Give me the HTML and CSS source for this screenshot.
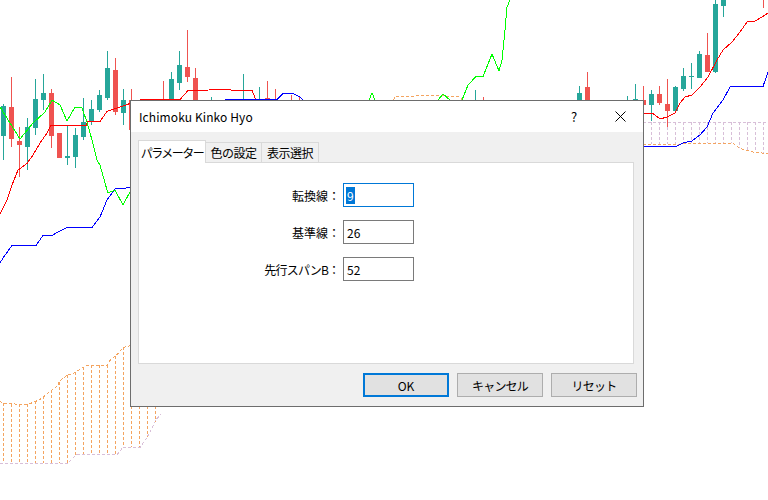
FILE: index.html
```html
<!DOCTYPE html>
<html lang="ja">
<head>
    <meta charset="UTF-8">
    <title>Ichimoku Kinko Hyo</title>
    <link rel="stylesheet" href="styles.css">
</head>
<body>
    <div class="chart">
        <svg class="plot" width="768" height="500" viewBox="0 0 768 500" shape-rendering="crispEdges">
            <!-- 雲 (先行スパン) -->
            <g fill="none" stroke-width="1" stroke-dasharray="3 2">
                <polyline stroke="#f4a460" points="0,401.5 3,403.5 27,404.5 33,402.5 40,399.5 50,391.5 57,386.5 60,380.5 67,375.5 75,372.5 83,367.5 87,365.5 107,365.5 110,360.5 117,354.5 123,347.5 131,345.5"/>
                <polyline stroke="#d8bfd8" points="0,463.5 67,463.5 77,454.5 117,454.5 123,447.5 140,447.5 147,437.5 157,418.5 161,414.5"/>
                <path stroke="#f4a460" d="M3.5 403V463M11.5 404V463M19.5 404V463M27.5 404V463M35.5 401V463M43.5 396V463M51.5 390V463M59.5 382V463M67.5 375V463M75.5 372V456M83.5 367V454M91.5 365V454M99.5 365V454M107.5 365V454M115.5 356V454M123.5 347V447M131.5 406V447M139.5 406V447M147.5 406V437M155.5 406V422"/>
                <polyline stroke="#f4a460" points="393,100 396,96.5 432,95.5 460,96.5 462,100"/>
                <polyline stroke="#d8bfd8" points="643,122.5 768,122.5"/>
                <polyline stroke="#f4a460" points="643,144.5 677,144.5 687,143.5 733,143.5 740,148.5 755,152.5 768,153.5"/>
                <path stroke="#d8bfd8" d="M651.5 122V144M659.5 122V144M667.5 122V144M675.5 122V144M683.5 122V143M691.5 122V143M699.5 122V143M707.5 122V143M715.5 122V143M723.5 122V143M731.5 122V143M739.5 122V148M747.5 122V150M755.5 122V152M763.5 122V153"/>
            </g>

            <!-- ローソク足 -->
            <g stroke="#26a69a" stroke-width="1">
                <path d="M3.5 104V160M27.5 118V170M35.5 79V135M43.5 74V110M67.5 125V165M75.5 128V168M83.5 98V140M91.5 100V125M99.5 90V112M107.5 51V100M123.5 89V125M171.5 72V100M179.5 51V90M211.5 97V100M243.5 74V100M259.5 87V100M475.5 90V100M579.5 86V100M627.5 96V100M635.5 84V100M651.5 90V121M675.5 86V111M683.5 68V91M691.5 63V89M699.5 51V78M715.5 0V73M723.5 0V17"/>
            </g>
            <g fill="#26a69a">
                <rect x="1" y="106" width="5" height="30"/>
                <rect x="25" y="127" width="5" height="20"/>
                <rect x="33" y="99" width="5" height="29"/>
                <rect x="41" y="93" width="5" height="7"/>
                <rect x="65" y="156" width="5" height="2"/>
                <rect x="73" y="135" width="5" height="22"/>
                <rect x="81" y="122" width="5" height="15"/>
                <rect x="89" y="109" width="5" height="13"/>
                <rect x="97" y="95" width="5" height="15"/>
                <rect x="105" y="68" width="5" height="30"/>
                <rect x="121" y="100" width="5" height="13"/>
                <rect x="169" y="79" width="5" height="21"/>
                <rect x="177" y="65" width="5" height="18"/>
                <rect x="577" y="93" width="5" height="7"/>
                <rect x="633" y="99" width="5" height="2"/>
                <rect x="649" y="94" width="5" height="11"/>
                <rect x="673" y="87" width="5" height="24"/>
                <rect x="681" y="76" width="5" height="13"/>
                <rect x="689" y="76" width="5" height="1"/>
                <rect x="697" y="54" width="5" height="24"/>
                <rect x="713" y="4" width="5" height="68"/>
                <rect x="721" y="0" width="5" height="6"/>
            </g>
            <g stroke="#ef5350" stroke-width="1">
                <path d="M11.5 77V147M19.5 127V177M51.5 89V148M115.5 58V115M131.5 89V130M163.5 81V100M187.5 30V82M195.5 68V100M267.5 81V100M275.5 89V100M291.5 95V100M299.5 97V100M483.5 97V100M587.5 72V100M643.5 86V105M659.5 86V105M667.5 79V127M707.5 33V72M763.5 0V8"/>
            </g>
            <g fill="#ef5350">
                <rect x="9" y="107" width="5" height="32"/>
                <rect x="17" y="141" width="5" height="4"/>
                <rect x="49" y="93" width="5" height="43"/>
                <rect x="57" y="133" width="5" height="25"/>
                <rect x="113" y="70" width="5" height="42"/>
                <rect x="129" y="100" width="5" height="30"/>
                <rect x="185" y="67" width="5" height="10"/>
                <rect x="193" y="78" width="5" height="22"/>
                <rect x="265" y="98" width="5" height="2"/>
                <rect x="585" y="87" width="5" height="13"/>
                <rect x="641" y="100" width="5" height="5"/>
                <rect x="657" y="94" width="5" height="9"/>
                <rect x="665" y="104" width="5" height="7"/>
                <rect x="705" y="55" width="5" height="17"/>
            </g>

            <!-- 転換線・基準線・遅行スパン -->
            <g fill="none" stroke-width="1">
                <polyline stroke="#ff0000" points="0,214 7,200 12,185 18,170 27,163.5 33,155 40,143 47,133 51,125.5 86,125.5 88,121.5 100,121.5 107,111.5 140,100 147,99.5 180,99.5 188,90.5 230,89.5 232,90.5 252,90.5 256,100"/>
                <polyline stroke="#ff0000" points="643,113.5 653,113.5 660,119 667,117 675,113 680,103 685,97 692,95 700,87 708,77 717,60 723,50 732,42 740,32 747,22 755,21 762,17 768,13"/>
                <polyline stroke="#0000ff" points="0,263 3,258 12,245.5 36,245.5 43,235.5 52,235.5 58,232 67,227.5 92,227.5 100,217 107,200 115,189 131,187.5"/>
                <polyline stroke="#0000ff" points="225,99.5 277,99.5 283,93.5 293,93.5 300,97 303,100"/>
                <polyline stroke="#0000ff" points="643,146.5 676,146.5 683,143 692,141 700,135 707,127 713,113 723,100 730,87 735,86.5 763,86.5 768,72"/>
                <polyline stroke="#00ff00" points="0,107 20,139 33,123 45,112 52,100 60,105 67,121 75,107 82,108 87,122 92,140 97,160 100,165 107,190 108,193 115,190 123,205 131,190"/>
                <polyline stroke="#00ff00" points="369,100 372,93 375,100"/>
                <polyline stroke="#00ff00" points="438,100 443,94 450,100"/>
                <polyline stroke="#00ff00" points="462,100 468,85 476,76.5 483,76.5 492,54 499,71 502,60 505,30 507,7 510,0"/>
            </g>
        </svg>

        <div class="dialog">
            <div class="titlebar">
                <span class="title">Ichimoku Kinko Hyo</span>
                <span class="caption-btn help">?</span>
                <span class="caption-btn">
                    <svg width="11" height="11" viewBox="0 0 11 11">
                        <path d="M0.5 0.5L10.5 10.5M10.5 0.5L0.5 10.5" stroke="#000" stroke-width="1" fill="none"/>
                    </svg>
                </span>
            </div>
            <div class="content">
                <div class="tabs">
                    <div class="tab active">パラメーター</div>
                    <div class="tab tab-color">色の設定</div>
                    <div class="tab tab-view">表示選択</div>
                </div>
                <div class="panel">
                    <div class="form">
                        <label class="field-label">転換線<span class="colon">：</span></label>
                        <div class="field focus"><span class="selected">9</span></div>
                        <label class="field-label">基準線<span class="colon">：</span></label>
                        <div class="field">26</div>
                        <label class="field-label kana">先行スパンB<span class="colon">：</span></label>
                        <div class="field">52</div>
                    </div>
                </div>
                <div class="buttons">
                    <button class="btn default">OK</button>
                    <button class="btn kana">キャンセル</button>
                    <button class="btn kana">リセット</button>
                </div>
            </div>
        </div>
    </div>
</body>
</html>
```

FILE: styles.css
```css
* {
    margin: 0;
    padding: 0;
    box-sizing: border-box;
}

body {
    font-family: "Noto Sans CJK JP", "Noto Sans", sans-serif;
    font-size: 12px;
    color: #000;
    background-color: #fff;
    overflow: hidden;
}

.chart {
    position: relative;
    width: 768px;
    height: 500px;
}

.plot {
    display: block;
}

.dialog {
    position: absolute;
    left: 130px;
    top: 100px;
    width: 514px;
    height: 307px;
    border: 1px solid #6d6d6d;
    background-color: #f0f0f0;
    display: flex;
    flex-direction: column;
}

.titlebar {
    height: 31px;
    background-color: #fff;
    display: flex;
    align-items: center;
}

.title {
    flex: 1;
    padding-left: 8px;
    font-size: 12px;
    letter-spacing: 0.1px;
}

.caption-btn {
    width: 46px;
    height: 31px;
    display: flex;
    align-items: center;
    justify-content: center;
}

.help {
    font-size: 13px;
}

.content {
    flex: 1;
    padding: 8px 6px 9px 7px;
    display: flex;
    flex-direction: column;
}

.tabs {
    display: flex;
    align-items: flex-end;
    height: 22px;
}

.tab {
    height: 20px;
    border: 1px solid #d9d9d9;
    border-bottom: none;
    border-left: none;
    background-color: #f0f0f0;
    display: flex;
    align-items: center;
    justify-content: center;
    white-space: nowrap;
}

.tab.active {
    position: relative;
    z-index: 1;
    width: 68px;
    height: 23px;
    margin-bottom: -1px;
    border-left: 1px solid #d9d9d9;
    background-color: #fff;
    letter-spacing: -1.5px;
}

.tab-color {
    width: 56px;
    letter-spacing: -0.5px;
}

.tab-view {
    width: 57px;
    letter-spacing: -0.5px;
}

.panel {
    height: 202px;
    margin-right: 3px;
    border: 1px solid #d9d9d9;
    background-color: #fff;
    padding-top: 20px;
}

.form {
    display: grid;
    grid-template-columns: 201px 71px;
    column-gap: 3px;
    row-gap: 13px;
    align-items: center;
}

.field-label {
    text-align: right;
    white-space: nowrap;
}

.field-label.kana {
    letter-spacing: -0.8px;
}

.colon {
    display: inline-block;
    width: 12px;
    text-align: center;
    letter-spacing: 0;
}

.field {
    height: 24px;
    border: 1px solid #7a7a7a;
    padding-left: 3px;
    display: flex;
    align-items: center;
}

.field.focus {
    border-color: #0078d7;
    padding-left: 2px;
}

.selected {
    background-color: #0078d7;
    color: #fff;
    height: 17px;
    line-height: 17px;
    padding: 0 1px;
}

.buttons {
    margin-top: 9px;
    display: flex;
    justify-content: flex-end;
    gap: 8px;
}

.btn {
    width: 86px;
    height: 24px;
    font-family: inherit;
    font-size: 12px;
    color: #000;
    background-color: #e1e1e1;
    border: 1px solid #adadad;
}

.btn.kana {
    letter-spacing: -0.8px;
}

.btn.default {
    border: 2px solid #0078d7;
}
```
